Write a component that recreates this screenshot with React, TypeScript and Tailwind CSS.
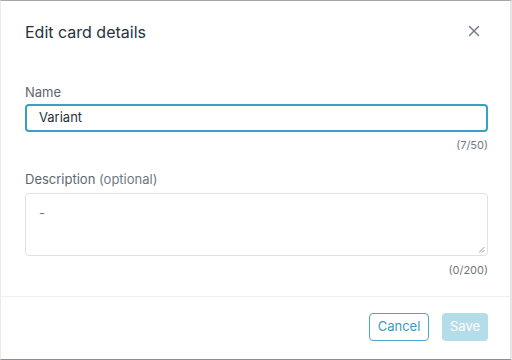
import React from "react";

export default function App() {
  return (
    <div
      className="w-[512px] h-[360px] bg-white border-t border-t-[#a4a8ac] border-l border-l-[#e8eaec] border-r-2 border-r-[#e4e6e8] border-b border-b-[#8a8e92] flex flex-col overflow-hidden"
      style={{ fontFamily: "Inter, 'Noto Sans', sans-serif" }}
    >
      <div className="flex justify-between pl-[24px] pr-[30px] pt-[19px] h-[62px] items-start">
        <h1 className="text-[16px] leading-[24px] text-[#28323c] font-normal">Edit card details</h1>
        <button className="mt-[5px] text-[#6b7680]">
          <svg width="12" height="12" viewBox="0 0 12 12" fill="none" stroke="currentColor" strokeWidth="1.4" strokeLinecap="round">
            <path d="M1.5 1.5 L10.5 10.5 M10.5 1.5 L1.5 10.5" />
          </svg>
        </button>
      </div>
      <div className="flex flex-col pl-[24px] pr-[22px] pt-[20px] flex-1">
        <label className="text-[13px] leading-[18px] text-[#5c6670]">Name</label>
        <div className="mt-[3px] h-[28px] border-2 border-[#3a9fc6] rounded-[4px] flex items-center pl-[12px] text-[13px] text-[#28323c]">
          Variant
        </div>
        <div className="self-end text-[11px] leading-[14px] text-[#6f7880] mt-[6px]">(7/50)</div>
        <label className="mt-[18px] text-[13px] leading-[18px] text-[#5c6670]">
          Description <span className="text-[#6f7880]">(optional)</span>
        </label>
        <div className="relative mt-[5px] h-[63px] border border-[#dfe1e3] rounded-[4px] pl-[13px] pt-[10px] text-[13px] text-[#6f7880] leading-[18px]">
          -
          <svg className="absolute right-[2px] bottom-[2px]" width="7" height="7" viewBox="0 0 7 7" stroke="#8a8e92" strokeWidth="0.9">
            <path d="M6.5 1 L1 6.5 M6.5 4 L4 6.5" />
          </svg>
        </div>
        <div className="self-end text-[11px] leading-[14px] text-[#6f7880] mt-[7px]">(0/200)</div>
      </div>
      <div className="border-t border-[#eff0f1] h-[63px] flex items-center justify-end gap-[13px] pr-[22px] pb-[2px]">
        <button className="h-[28px] w-[60px] border border-[#4aa6cb] rounded-[4px] text-[13px] text-[#3a9bc2]">Cancel</button>
        <button className="h-[28px] w-[46px] rounded-[4px] bg-[#b5dce9] text-[13px] text-white">Save</button>
      </div>
    </div>
  );
}
